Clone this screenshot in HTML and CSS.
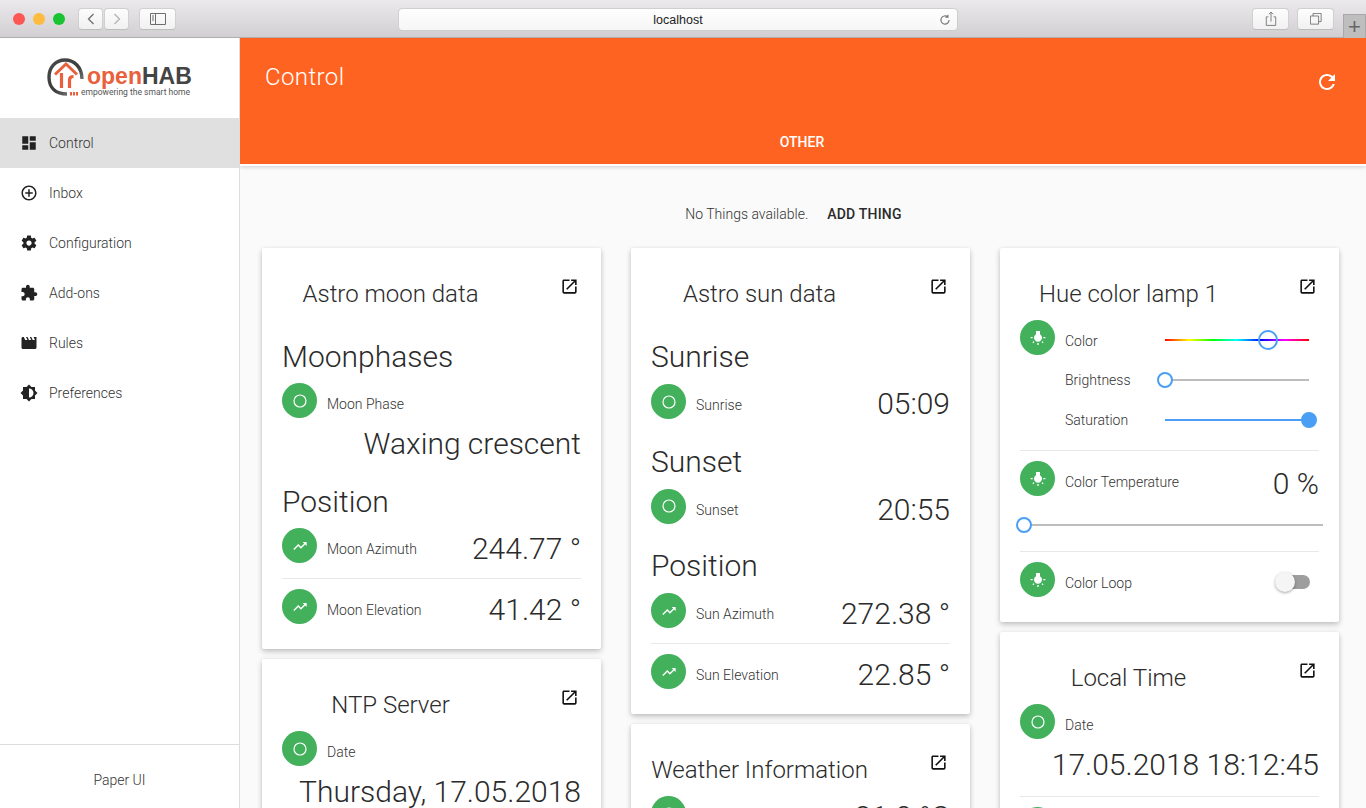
FILE: index.html
```html
<!DOCTYPE html>
<html lang="en">
<head>
<meta charset="utf-8">
<title>Paper UI</title>
<link rel="stylesheet" href="styles.css">
</head>
<body>
<svg class="sprite" width="0" height="0">
  <symbol id="i-dashboard" viewBox="0 0 24 24"><path d="M3 13h8V3H3v10zm0 8h8v-6H3v6zm10 0h8V11h-8v10zm0-18v6h8V3h-8z"/></symbol>
  <symbol id="i-inbox" viewBox="0 0 24 24"><path d="M13 7h-2v4H7v2h4v4h2v-4h4v-2h-4V7zm-1-5C6.48 2 2 6.48 2 12s4.48 10 10 10 10-4.48 10-10S17.52 2 12 2zm0 18c-4.41 0-8-3.59-8-8s3.59-8 8-8 8 3.59 8 8-3.59 8-8 8z"/></symbol>
  <symbol id="i-settings" viewBox="0 0 24 24"><path d="M19.43 12.98c.04-.32.07-.64.07-.98s-.03-.66-.07-.98l2.11-1.65c.19-.15.24-.42.12-.64l-2-3.46c-.12-.22-.39-.3-.61-.22l-2.49 1c-.52-.4-1.08-.73-1.69-.98l-.38-2.65C14.46 2.18 14.25 2 14 2h-4c-.25 0-.46.18-.49.42l-.38 2.65c-.61.25-1.17.59-1.69.98l-2.49-1c-.23-.09-.49 0-.61.22l-2 3.46c-.13.22-.07.49.12.64l2.11 1.65c-.04.32-.07.65-.07.98s.03.66.07.98l-2.11 1.65c-.19.15-.24.42-.12.64l2 3.46c.12.22.39.3.61.22l2.49-1c.52.4 1.08.73 1.69.98l.38 2.65c.03.24.24.42.49.42h4c.25 0 .46-.18.49-.42l.38-2.65c.61-.25 1.17-.59 1.69-.98l2.49 1c.23.09.49 0 .61-.22l2-3.46c.12-.22.07-.49-.12-.64l-2.11-1.65zM12 15.5c-1.93 0-3.5-1.57-3.5-3.5s1.57-3.5 3.5-3.5 3.5 1.57 3.5 3.5-1.57 3.5-3.5 3.5z"/></symbol>
  <symbol id="i-ext" viewBox="0 0 24 24"><path d="M20.5 11H19V7c0-1.1-.9-2-2-2h-4V3.5C13 2.12 11.88 1 10.5 1S8 2.12 8 3.5V5H4c-1.1 0-1.99.9-1.99 2v3.8H3.5c1.49 0 2.7 1.21 2.7 2.7s-1.21 2.7-2.7 2.7H2V20c0 1.1.9 2 2 2h3.8v-1.5c0-1.49 1.21-2.7 2.7-2.7 1.49 0 2.7 1.21 2.7 2.7V22H17c1.1 0 2-.9 2-2v-4h1.5c1.38 0 2.5-1.12 2.5-2.5S21.88 11 20.5 11z"/></symbol>
  <symbol id="i-movie" viewBox="0 0 24 24"><path d="M18 4l2 4h-3l-2-4h-2l2 4h-3l-2-4H8l2 4H7L5 4H4c-1.1 0-1.99.9-1.99 2L2 18c0 1.1.9 2 2 2h16c1.1 0 2-.9 2-2V4h-4z"/></symbol>
  <symbol id="i-bright" viewBox="0 0 24 24"><path d="M20 15.31L23.31 12 20 8.69V4h-4.69L12 .69 8.69 4H4v4.69L.69 12 4 15.31V20h4.69L12 23.31 15.31 20H20v-4.69zM12 18V6c3.31 0 6 2.69 6 6s-2.69 6-6 6z"/></symbol>
  <symbol id="i-refresh" viewBox="0 0 24 24"><path d="M17.65 6.35C16.2 4.9 14.21 4 12 4c-4.42 0-7.99 3.58-7.99 8s3.57 8 7.99 8c3.73 0 6.84-2.55 7.73-6h-2.08c-.82 2.33-3.04 4-5.65 4-3.31 0-6-2.69-6-6s2.69-6 6-6c1.66 0 3.14.69 4.22 1.78L13 11h7V4l-2.35 2.35z"/></symbol>
  <symbol id="i-open" viewBox="0 0 24 24"><path d="M19 19H5V5h7V3H5c-1.11 0-2 .9-2 2v14c0 1.1.89 2 2 2h14c1.1 0 2-.9 2-2v-7h-2v7zM14 3v2h3.59l-9.83 9.83 1.41 1.41L19 6.41V10h2V3h-7z"/></symbol>
  <symbol id="i-trend" viewBox="0 0 24 24"><path d="M16 6l2.29 2.29-4.88 4.88-4-4L2 16.59 3.41 18l6-6 4 4 6.3-6.29L22 12V6z"/></symbol>
  <symbol id="i-bulb" viewBox="0 0 24 24"><path d="M3.55 18.54l1.41 1.41 1.79-1.8-1.41-1.41-1.79 1.8zM11 22.45h2V19.5h-2v2.95zM4 10.5H1v2h3v-2zm11-4.19V1.5H9v4.81C7.21 7.35 6 9.28 6 11.5c0 3.31 2.69 6 6 6s6-2.69 6-6c0-2.22-1.21-4.15-3-5.19zm5 4.19v2h3v-2h-3zm-2.76 7.66l1.79 1.8 1.41-1.41-1.8-1.79-1.4 1.4z"/></symbol>
  <symbol id="i-ring" viewBox="0 0 24 24"><circle cx="12" cy="12" r="9" fill="none" stroke="#fff" stroke-width="1.8"/></symbol>
</svg>

<div class="chrome">
  <div class="lights"><span class="light red"></span><span class="light yellow"></span><span class="light green"></span></div>
  <div class="nav-pair">
    <span class="btn btn-nav"><svg viewBox="0 0 12 16" width="10" height="14"><path d="M9 2L3 8l6 6" fill="none" stroke="#707070" stroke-width="1.6"/></svg></span>
    <span class="btn btn-nav"><svg viewBox="0 0 12 16" width="10" height="14"><path d="M3 2l6 6-6 6" fill="none" stroke="#b4b4b4" stroke-width="1.6"/></svg></span>
  </div>
  <span class="btn btn-side"><svg viewBox="0 0 16 12" width="16" height="12"><path d="M.5.5h15v11H.5zM5.5.5v11M2 3h2M2 5h2M2 7h2" fill="none" stroke="#6e6e6e"/></svg></span>
  <div class="address"><span class="address-text">localhost</span><svg class="reload" viewBox="0 0 24 24" width="14" height="14"><path d="M19 12a7 7 0 1 1-2.200-5.100" fill="none" stroke="#777" stroke-width="2"/><path d="M18 2v6h-6z" fill="#777"/></svg></div>
  <span class="btn btn-tool"><svg viewBox="0 0 14 18" width="12" height="16"><path d="M4 6.500H1.500v10h11v-10H10M7 12V1M4.500 3.500L7 1l2.500 2.500" fill="none" stroke="#6e6e6e"/></svg></span>
  <span class="btn btn-tool btn-tabs"><svg viewBox="0 0 14 14" width="12" height="12"><path d="M.5 3.500h9.500v9.500H.5zM3.500 3.500V.5H13v9.500h-3" fill="none" stroke="#6e6e6e"/></svg></span>
  <span class="newtab">+</span>
</div>

<div class="app">
  <aside class="sidebar">
    <div class="logo">
      <svg class="logo-mark" viewBox="0 0 38 40" width="38" height="40">
        <defs><linearGradient id="ring-shade" x1="0" y1="0" x2="1" y2="1"><stop offset="0" stop-color="#4a4a4a"/><stop offset=".55" stop-color="#3c3c3c"/><stop offset="1" stop-color="#9a9a9a"/></linearGradient></defs>
        <path d="M35 21C35 9 27 2 18 2 8 2 2 10 2 19c0 11 7 17 18 17" fill="none" stroke="url(#ring-shade)" stroke-width="3.400"/>
        <path d="M8 16.500L19 6l11 10.500" fill="none" stroke="#e8603c" stroke-width="3"/>
        <path d="M14.500 15v15M22.500 30V22c0-2 1.500-3.500 4-3.500" fill="none" stroke="#e8603c" stroke-width="3.200"/>
        <path d="M23 34h2v3.500h-2zM26 34h2v3.500h-2zM29 34h2v3.500h-2z" fill="#e8603c"/>
      </svg>
      <div class="logo-words">
        <div class="logo-name"><span class="logo-open">open</span><span class="logo-hab">HAB</span></div>
        <div class="logo-tag">empowering the smart home</div>
      </div>
    </div>
    <nav class="menu">
      <a class="menu-item active"><svg class="menu-icon"><use href="#i-dashboard"/></svg>Control</a>
      <a class="menu-item"><svg class="menu-icon"><use href="#i-inbox"/></svg>Inbox</a>
      <a class="menu-item"><svg class="menu-icon"><use href="#i-settings"/></svg>Configuration</a>
      <a class="menu-item"><svg class="menu-icon"><use href="#i-ext"/></svg>Add-ons</a>
      <a class="menu-item"><svg class="menu-icon"><use href="#i-movie"/></svg>Rules</a>
      <a class="menu-item"><svg class="menu-icon"><use href="#i-bright"/></svg>Preferences</a>
    </nav>
    <div class="sidebar-foot">Paper UI</div>
  </aside>

  <main class="main">
    <header class="topbar">
      <div class="topbar-row">
        <h1 class="topbar-title">Control</h1>
        <svg class="topbar-refresh"><use href="#i-refresh"/></svg>
      </div>
      <div class="tabs"><span class="tab">OTHER</span></div>
    </header>

    <div class="content">
      <p class="notice">No Things available.<span class="notice-action">ADD THING</span></p>
      <div class="columns">
        <div class="column">
          <section class="card">
            <div class="card-head"><h2 class="card-title">Astro moon data</h2><svg class="open-icon"><use href="#i-open"/></svg></div>
            <h3 class="group first">Moonphases</h3>
            <div class="item after-heading-tight"><span class="badge"><svg><use href="#i-ring"/></svg></span><span class="label">Moon Phase</span></div>
            <div class="value-line">Waxing crescent</div>
            <h3 class="group after-value">Position</h3>
            <div class="item after-heading-tight"><span class="badge"><svg><use href="#i-trend"/></svg></span><span class="label">Moon Azimuth</span><span class="value">244.77 °</span></div>
            <div class="sep"></div>
            <div class="item"><span class="badge"><svg><use href="#i-trend"/></svg></span><span class="label">Moon Elevation</span><span class="value">41.42 °</span></div>
          </section>
          <section class="card">
            <div class="card-head"><h2 class="card-title">NTP Server</h2><svg class="open-icon"><use href="#i-open"/></svg></div>
            <div class="item first-item"><span class="badge"><svg><use href="#i-ring"/></svg></span><span class="label">Date</span></div>
            <div class="value-line">Thursday, 17.05.2018</div>
          </section>
        </div>

        <div class="column">
          <section class="card">
            <div class="card-head"><h2 class="card-title">Astro sun data</h2><svg class="open-icon"><use href="#i-open"/></svg></div>
            <h3 class="group first">Sunrise</h3>
            <div class="item after-heading"><span class="badge"><svg><use href="#i-ring"/></svg></span><span class="label">Sunrise</span><span class="value value-up">05:09</span></div>
            <h3 class="group">Sunset</h3>
            <div class="item after-heading"><span class="badge"><svg><use href="#i-ring"/></svg></span><span class="label">Sunset</span><span class="value">20:55</span></div>
            <h3 class="group">Position</h3>
            <div class="item after-heading"><span class="badge"><svg><use href="#i-trend"/></svg></span><span class="label">Sun Azimuth</span><span class="value">272.38 °</span></div>
            <div class="sep"></div>
            <div class="item"><span class="badge"><svg><use href="#i-trend"/></svg></span><span class="label">Sun Elevation</span><span class="value">22.85 °</span></div>
          </section>
          <section class="card">
            <div class="card-head"><h2 class="card-title">Weather Information</h2><svg class="open-icon"><use href="#i-open"/></svg></div>
            <div class="item first-item"><span class="badge"><svg><use href="#i-ring"/></svg></span><span class="label"></span><span class="value">21.0 °C</span></div>
          </section>
        </div>

        <div class="column">
          <section class="card">
            <div class="card-head"><h2 class="card-title">Hue color lamp 1</h2><svg class="open-icon"><use href="#i-open"/></svg></div>
            <div class="item first-item"><span class="badge"><svg><use href="#i-bulb"/></svg></span><span class="label">Color</span><span class="slider slider-low"><span class="track track-hue"></span><span class="thumb thumb-hue"></span></span></div>
            <div class="slider-row row-brightness"><span class="label label-slider">Brightness</span><span class="slider"><span class="track"></span><span class="thumb thumb-min"></span></span></div>
            <div class="slider-row"><span class="label label-slider">Saturation</span><span class="slider"><span class="track track-blue"></span><span class="thumb thumb-max"></span></span></div>
            <div class="sep sep-sat"></div>
            <div class="item"><span class="badge"><svg><use href="#i-bulb"/></svg></span><span class="label">Color Temperature</span><span class="value value-low">0 %</span></div>
            <div class="slider slider-full"><span class="track"></span><span class="thumb thumb-min"></span></div>
            <div class="sep sep-temp"></div>
            <div class="item"><span class="badge"><svg><use href="#i-bulb"/></svg></span><span class="label">Color Loop</span><span class="switch"><span class="switch-knob"></span></span></div>
          </section>
          <section class="card">
            <div class="card-head"><h2 class="card-title">Local Time</h2><svg class="open-icon"><use href="#i-open"/></svg></div>
            <div class="item first-item"><span class="badge"><svg><use href="#i-ring"/></svg></span><span class="label">Date</span></div>
            <div class="value-line local-value">17.05.2018 18:12:45</div>
            <div class="sep sep-local"></div>
            <div class="item"><span class="badge"></span></div>
          </section>
        </div>
      </div>
    </div>
  </main>
</div>
</body>
</html>
```

FILE: styles.css
```css
* { box-sizing: border-box; }
html, body { margin: 0; height: 808px; overflow: hidden; }
body { font-family: Roboto, "Liberation Sans", sans-serif; color: #2b2b2b; background: #fafafa; }
.sprite { position: absolute; }

/* Browser chrome */
.chrome {
  height: 38px; display: flex; align-items: flex-start; padding-top: 8px;
  background: linear-gradient(#ebe9eb, #d1cfd1); border-bottom: 1px solid #aeaeae;
  font-family: "Liberation Sans", sans-serif;
}
.lights { display: flex; gap: 8px; margin: 5px 0 0 13px; }
.light { width: 12px; height: 12px; border-radius: 50%; }
.red { background: #fc5753; } .yellow { background: #fdbc40; } .green { background: #19c332; }
.nav-pair { display: flex; gap: 1px; margin-left: 13px; }
.btn {
  height: 22px; display: flex; align-items: center; justify-content: center;
  background: linear-gradient(#fdfdfd, #f1f1f1); border: 1px solid #d0d0d0; border-bottom-color: #bdbdbd; border-radius: 4px;
}
.btn-nav { width: 25px; }
.btn-side { width: 37px; margin-left: 10px; }
.address {
  width: 560px; height: 23px; margin-left: 222px; display: flex; align-items: center; justify-content: center; position: relative;
  background: linear-gradient(#fefefe, #f6f6f6); border: 1px solid #cfcfcf; border-radius: 4px;
}
.address-text { font-size: 12.500px; color: #222; }
.reload { position: absolute; right: 5px; top: 4px; }
.btn-tool { width: 37px; margin-left: 294px; }
.btn-tabs { margin-left: 8px; }
.newtab {
  width: 23px; height: 24px; margin: 6px 0 0 9px; background: #bebebe; border: 1px solid #a9a9a9; border-bottom: 0;
  font-size: 22px; line-height: 23px; color: #666; text-align: center; font-weight: 300;
}

/* App frame */
.app { display: flex; height: 770px; }
.sidebar { width: 240px; flex: none; display: flex; flex-direction: column; background: #fff; border-right: 1px solid #dcdcdc; }
.logo { height: 80px; display: flex; align-items: flex-start; padding: 20px 0 0 47px; }
.logo-mark { flex: none; }
.logo-words { margin-left: -4px; padding-top: 6px; width: 116px; }
.logo-name { font-family: "Liberation Sans", sans-serif; font-size: 23px; line-height: 24px; font-weight: 700; padding-left: 6px; }
.logo-open { color: #e8603c; } .logo-hab { color: #444; }
.logo-tag { font-family: Roboto, sans-serif; font-size: 8.500px; line-height: 9px; color: #555; white-space: nowrap; }
.menu { flex: 1; }
.menu-item { height: 50px; display: flex; align-items: center; padding-left: 20px; font-size: 14px; font-weight: 300; color: #333; }
.menu-item.active { background: #e0e0e0; }
.menu-icon { width: 18px; height: 18px; fill: #222; margin-right: 11px; flex: none; }
.sidebar-foot { height: 64px; padding-top: 27px; border-top: 1px solid #ddd; text-align: center; font-size: 14px; font-weight: 300; color: #333; }

.main { flex: 1; min-width: 0; overflow: hidden; }
.topbar { height: 128px; background: #ff6321; color: #fff; border-bottom: 2px solid #fff; box-shadow: 0 1px 4px rgba(0,0,0,.18); position: relative; }
.topbar-row { height: 78px; display: flex; justify-content: space-between; padding: 23px 27px 0 25px; }
.topbar-title { margin: 0; font-size: 24px; line-height: 32px; font-weight: 300; letter-spacing: .4px; }
.topbar-refresh { width: 24px; height: 24px; fill: #fff; margin-top: 9px; }
.tabs { display: flex; justify-content: center; padding-right: 2px; }
.tab { font-size: 14px; line-height: 52px; font-weight: 500; height: 48px; }

.content { padding: 0 27px 0 22px; }
.notice { margin: 40px 0 0; height: 16px; line-height: 16px; font-size: 14px; font-weight: 300; color: #333; text-align: center; padding-right: 14px; }
.notice-action { color: #2b2b2b; font-weight: 500; margin-left: 19px; letter-spacing: .2px; }
.columns { display: grid; grid-template-columns: repeat(3, 339px); column-gap: 30px; margin-top: 26px; }
.column { display: flex; flex-direction: column; gap: 10px; }

/* Cards */
.card { background: #fff; border-radius: 2px; padding: 31px 20px 25px; box-shadow: 0 3px 6px rgba(0,0,0,.16), 0 1px 4px rgba(0,0,0,.12); }
.card-head { display: flex; height: 30px; position: relative; }
.card-title { width: 217px; margin: 0; font-size: 24px; line-height: 30px; font-weight: 300; text-align: center; white-space: nowrap; }
.open-icon { width: 19px; height: 19px; fill: #111; position: absolute; left: 278px; top: -2px; }
.group { margin: 24.500px 0 0; font-size: 30px; line-height: 36px; font-weight: 300; }
.group.first { margin-top: 30px; }
.group.after-value { margin-top: 22px; }
.item { display: flex; align-items: center; height: 35px; }
.after-heading { margin-top: 9px; }
.after-heading-tight { margin-top: 8px; }
.first-item { margin-top: 11px; }
.badge { width: 35px; height: 35px; border-radius: 50%; background: #43b05c; flex: none; display: flex; align-items: center; justify-content: center; }
.badge svg { width: 16px; height: 16px; fill: #fff; }
.label { margin-left: 10px; padding-top: 7px; font-size: 14px; line-height: 16px; font-weight: 300; color: #333; white-space: nowrap; }
.value { margin-left: auto; padding-top: 7px; font-size: 30px; line-height: 36px; font-weight: 300; white-space: nowrap; }
.value-low { padding-top: 10px; }
.value-up { padding-top: 5px; }
.value-line { margin-top: 8px; font-size: 30px; line-height: 36px; font-weight: 300; text-align: right; white-space: nowrap; }
.sep { height: 1px; background: #e8e8e8; margin: 15px 0 10px; }

/* Sliders */
.slider { display: block; position: relative; width: 144px; height: 2px; margin-left: auto; margin-right: 10px; }
.slider-low { margin-top: 5px; }
.track { position: absolute; inset: 0; background: #bdbdbd; }
.track-hue { background: linear-gradient(to right, #f00 0%, #ff0 17%, #0f0 33%, #0ff 50%, #00f 67%, #f0f 83%, #f00 100%); }
.track-blue { background: #4a9ff5; }
.thumb { position: absolute; width: 16px; height: 16px; top: -7px; border-radius: 50%; border: 2px solid #4a9ff5; background: #fff; }
.thumb-min { left: -8px; }
.thumb-max { right: -8px; background: #4a9ff5; }
.thumb-hue { width: 20px; height: 20px; top: -9px; left: 93px; background: transparent; }
.label-slider { padding-top: 0; }
.slider-row { display: flex; align-items: center; height: 40px; padding-left: 35px; }
.row-brightness { margin-top: 5px; }
.sep-sat { margin-top: 10px; }
.slider-full { width: 299px; margin: 28px 0 0 4px; }
.sep-temp { margin-top: 25px; }
.sep-local { margin: 13px 0 10px; }
.switch { display: block; position: relative; width: 34px; height: 14px; margin-left: auto; margin-right: 9px; margin-top: 4px; border-radius: 7px; background: #9e9e9e; }
.switch-knob { position: absolute; left: -1px; top: -3px; width: 20px; height: 20px; border-radius: 50%; background: #f5f5f5; box-shadow: 0 1px 3px rgba(0,0,0,.35); }
```
